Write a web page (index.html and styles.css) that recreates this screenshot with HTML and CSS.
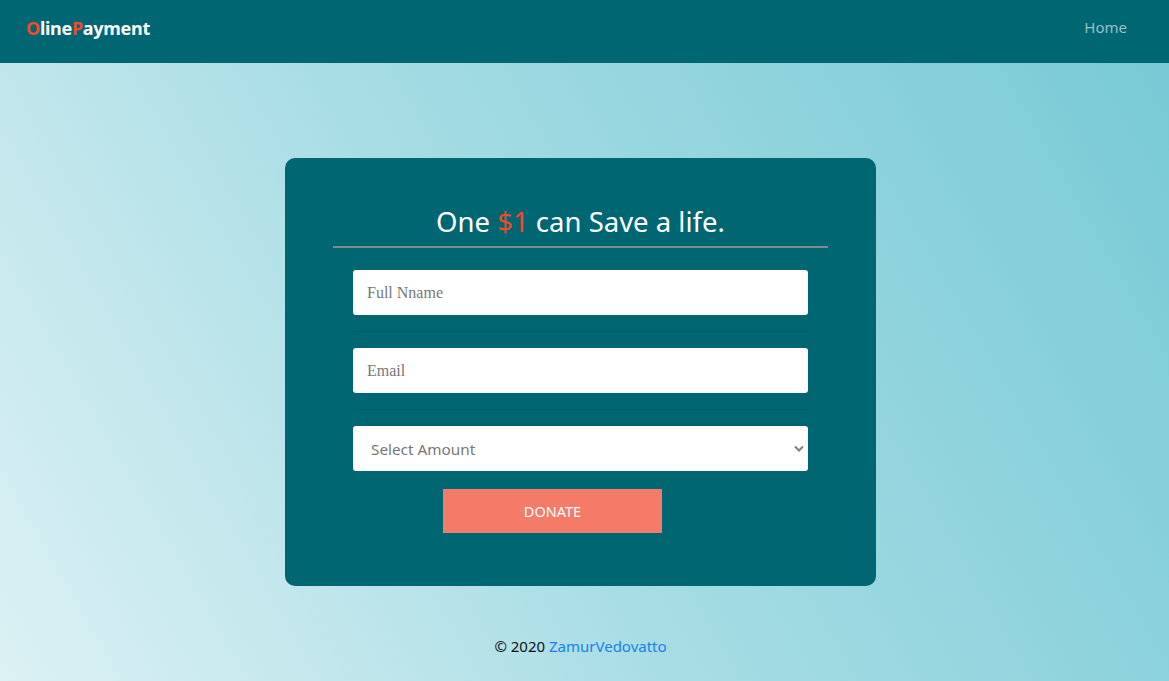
FILE: index.html
```html
<!DOCTYPE html>
<html lang="en">
<head>
<meta charset="utf-8">
<title>OlinePayment</title>
<link rel="stylesheet" href="styles.css">
</head>
<body>
<header class="navbar">
  <a class="brand" href="#"><span class="accent">O</span>line<span class="accent">P</span>ayment</a>
  <a class="nav-link" href="#">Home</a>
</header>
<main class="main">
  <section class="card">
    <h1 class="title">One <span class="accent">$1</span> can Save a life.</h1>
    <hr class="title-rule">
    <form class="form">
      <input class="field" type="text" placeholder="Full Nname">
      <hr class="sep">
      <input class="field" type="email" placeholder="Email">
      <hr class="sep">
      <div class="select-wrap">
        <select class="field select">
          <option>Select Amount</option>
        </select>
        <svg class="chev" width="10" height="7" viewBox="0 0 10 7"><path d="M1 1.5 L5 5.5 L9 1.5" fill="none" stroke="#808080" stroke-width="2"/></svg>
      </div>
      <button class="donate" type="button">DONATE</button>
    </form>
  </section>
  <footer class="footer">© 2020 <a href="#" class="footer-link">ZamurVedovatto</a></footer>
</main>
</body>
</html>
```
FILE: styles.css
```css
* { box-sizing: border-box; }
html, body { margin: 0; padding: 0; height: 100%; }
body {
  font-family: "Trebuchet MS", "Noto Sans", sans-serif;
  background: linear-gradient(60deg, #dcf1f4 0%, #a6dce4 45%, #76c9d5 100%);
  min-height: 681px;
}
.navbar {
  height: 63px;
  background: #006672;
  display: flex;
  align-items: center;
  justify-content: space-between;
  padding: 0 42px 0 26px;
}
.brand {
  color: #fff;
  font-weight: 700;
  font-size: 18px;
  text-decoration: none;
  letter-spacing: -0.3px;
  margin-top: -8px;
}
.accent { color: #ee4b2b; }
.nav-link {
  color: #9ebfc4;
  text-decoration: none;
  font-size: 15px;
  margin-top: -10px;
}
.main {
  display: flex;
  flex-direction: column;
  align-items: center;
  padding: 95px 8px 0 0;
}
.card {
  width: 591px;
  height: 428px;
  background: #006672;
  border-radius: 10px;
  padding: 44px 48px 0;
}
.title {
  margin: 0;
  color: #fff;
  font-weight: 400;
  font-size: 27.5px;
  text-align: center;
  line-height: 40px;
}
.title-rule {
  margin: 4px 0 0;
  border: 0;
  height: 2px;
  background: #7f8a8c;
}
.form {
  display: flex;
  flex-direction: column;
  padding: 22px 20px 0;
}
.field {
  width: 455px;
  height: 45px;
  border: 0;
  border-radius: 3px;
  background: #fff;
  padding: 0 14px;
  font-family: "Liberation Serif", serif;
  font-size: 16px;
  color: #333;
  outline: none;
}
.field::placeholder { color: #777; }
.sep {
  margin: 16px 0;
  border: 0;
  height: 1px;
  background: #005b66;
}
.select-wrap { position: relative; }
.select {
  appearance: none;
  -webkit-appearance: none;
  font-family: "Trebuchet MS", "Noto Sans", sans-serif;
  font-size: 15.3px;
  color: #777;
  padding-left: 18px;
}
.chev { position: absolute; right: 4px; top: 19px; pointer-events: none; }
.donate {
  margin: 18px 0 0 90px;
  width: 219px;
  height: 44px;
  border: 0;
  background: #f37b67;
  color: #fff;
  font-family: "Trebuchet MS", "Noto Sans", sans-serif;
  font-size: 14.5px;
}
.footer {
  margin-top: 50px;
  font-size: 15px;
  color: #111;
}
.footer-link { color: #1a7ef2; text-decoration: none; }
```
